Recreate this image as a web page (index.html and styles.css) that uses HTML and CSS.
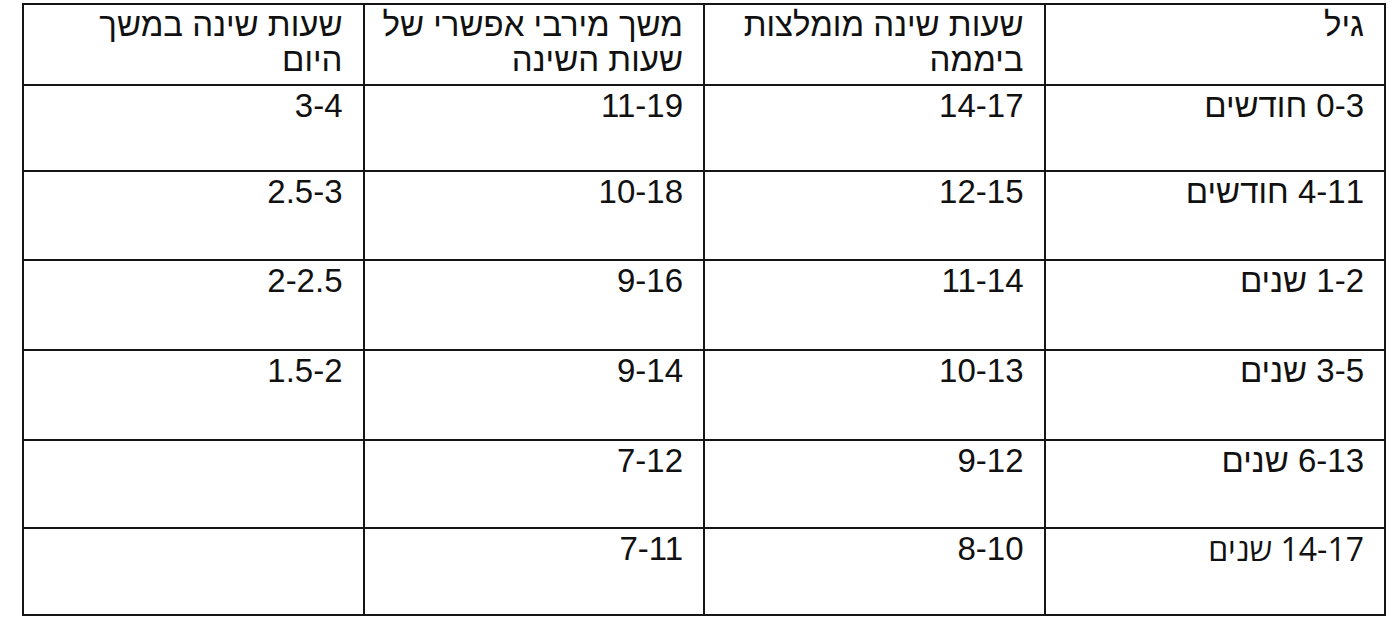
FILE: index.html
```html
<!DOCTYPE html>
<html lang="he" dir="rtl">
<head>
<meta charset="utf-8">
<title>שעות שינה</title>
<link rel="stylesheet" href="styles.css">
</head>
<body>
<div class="page">
<table class="sleep">
<tbody>
<tr class="head">
<td>גיל</td>
<td>שעות שינה מומלצות<br>ביממה</td>
<td>משך מירבי אפשרי של<br>שעות השינה</td>
<td>שעות שינה במשך<br>היום</td>
</tr>
<tr>
<td>0-3 חודשים</td>
<td>14-17</td>
<td>11-19</td>
<td>3-4</td>
</tr>
<tr>
<td>4-11 חודשים</td>
<td>12-15</td>
<td>10-18</td>
<td>2.5-3</td>
</tr>
<tr>
<td>1-2 שנים</td>
<td>11-14</td>
<td>9-16</td>
<td>2-2.5</td>
</tr>
<tr>
<td>3-5 שנים</td>
<td>10-13</td>
<td>9-14</td>
<td>1.5-2</td>
</tr>
<tr>
<td>6-13 שנים</td>
<td>9-12</td>
<td>7-12</td>
<td></td>
</tr>
<tr>
<td class="alt">14-17 שנים</td>
<td>8-10</td>
<td>7-11</td>
<td></td>
</tr>
</tbody>
</table>
</div>
</body>
</html>
```
FILE: styles.css
```css
html, body {
  margin: 0;
  padding: 0;
  background: #ffffff;
}

.page {
  padding: 3px 0 0 22px;
  direction: ltr;
}

.sleep {
  direction: rtl;
  border-collapse: collapse;
  table-layout: fixed;
  width: 1364px;
  font-family: "Liberation Sans", Arial, sans-serif;
  font-size: 33px;
  line-height: 35px;
  color: #111111;
}

.sleep td {
  border: 2px solid #151515;
  text-align: right;
  vertical-align: top;
  padding: 2px 20px 0 6px;
  width: 25%;
  white-space: nowrap;
  overflow: hidden;
}

.sleep tr.head td { padding-top: 2px; }

.sleep tr:nth-child(1) { height: 81px; }
.sleep tr:nth-child(2) { height: 86px; }
.sleep tr:nth-child(3) { height: 89px; }
.sleep tr:nth-child(4) { height: 90px; }
.sleep tr:nth-child(5) { height: 90px; }
.sleep tr:nth-child(6) { height: 88px; }
.sleep tr:nth-child(7) { height: 87px; }

.sleep td.alt {
  font-family: "Open Sans", "Noto Sans", sans-serif;
  font-size: 32px;
}
```
